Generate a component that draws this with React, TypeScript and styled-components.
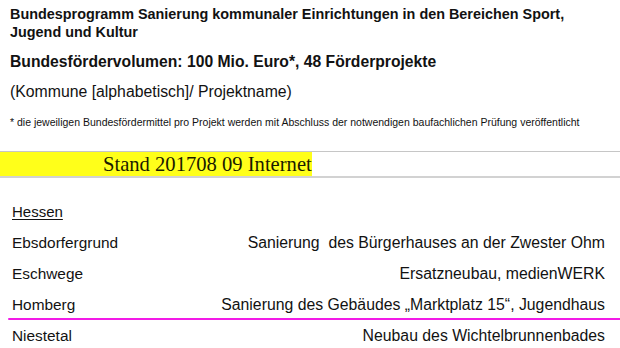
import React from 'react'
import styled, { createGlobalStyle } from 'styled-components'

const GlobalStyle = createGlobalStyle`
  html, body {
    margin: 0;
    padding: 0;
    background: #fff;
  }
  body {
    font-family: 'Liberation Sans', Arial, sans-serif;
    color: #121212;
  }
`

const Page = styled.div`
  width: 620px;
  height: 348px;
  overflow: hidden;
  background: #fff;
`

const Header = styled.header`
  padding: 5px 10px 0;
`

const Title = styled.h1`
  margin: 0;
  font-size: 14.4px;
  line-height: 18px;
  font-weight: bold;
`

const Subtitle = styled.h2`
  margin: 11px 0 0;
  font-size: 15.7px;
  line-height: 20px;
  font-weight: bold;
`

const Legend = styled.p`
  margin: 10px 0 0;
  font-size: 15.8px;
  line-height: 20px;
`

const Footnote = styled.p`
  margin: 14px 0 0;
  font-family: 'Liberation Sans Narrow', 'Liberation Sans', Arial, sans-serif;
  font-size: 10.5px;
  line-height: 12px;
  white-space: nowrap;
`

const StandBar = styled.div`
  margin-top: 23px;
  border-top: 1px solid #c6c6c6;
  border-bottom: 2px solid #d2d2d2;
  height: 24px;
`

const StandLabel = styled.span`
  display: inline-block;
  height: 24px;
  padding: 0 0 0 103px;
  background: #ffff1a;
  font-family: 'Liberation Serif', 'Times New Roman', serif;
  font-size: 20.6px;
  line-height: 25px;
  color: #1a1a00;
`

const List = styled.section`
  margin-top: 18px;
  padding: 0 15px 0 12px;
`

const StateName = styled.div`
  font-size: 15px;
  line-height: 31px;
  text-decoration: underline;
  text-underline-offset: 2px;
`

const Row = styled.div<{ $marked?: boolean }>`
  position: relative;
  display: flex;
  justify-content: space-between;
  align-items: baseline;
  font-size: 15.4px;
  line-height: 31px;

  ${(p) =>
    p.$marked &&
    `
    &::after {
      content: '';
      position: absolute;
      left: -4px;
      right: -15px;
      bottom: 0;
      height: 2.5px;
      border-radius: 2px 0 0 2px;
      background: #f21ae6;
    }
  `}
`

const ProjectName = styled.span`
  font-size: 15.8px;
  white-space: pre;
`

const projects = [
  { town: 'Ebsdorfergrund', name: 'Sanierung  des Bürgerhauses an der Zwester Ohm' },
  { town: 'Eschwege', name: 'Ersatzneubau, medienWERK' },
  { town: 'Homberg', name: 'Sanierung des Gebäudes \u201eMarktplatz 15\u201c, Jugendhaus', marked: true },
  { town: 'Niestetal', name: 'Neubau des Wichtelbrunnenbades' },
]

export default function App() {
  return (
    <Page>
      <GlobalStyle />
      <Header>
        <Title>
          Bundesprogramm Sanierung kommunaler Einrichtungen in den Bereichen Sport,
          <br />
          Jugend und Kultur
        </Title>
        <Subtitle>Bundesfördervolumen: 100 Mio. Euro*, 48 Förderprojekte</Subtitle>
        <Legend>(Kommune [alphabetisch]/ Projektname)</Legend>
        <Footnote>
          * die jeweiligen Bundesfördermittel pro Projekt werden mit Abschluss der notwendigen baufachlichen Prüfung veröffentlicht
        </Footnote>
      </Header>
      <StandBar>
        <StandLabel>Stand 201708 09 Internet</StandLabel>
      </StandBar>
      <List>
        <StateName>Hessen</StateName>
        {projects.map((p) => (
          <Row key={p.town} $marked={p.marked}>
            <span>{p.town}</span>
            <ProjectName>{p.name}</ProjectName>
          </Row>
        ))}
      </List>
    </Page>
  )
}
